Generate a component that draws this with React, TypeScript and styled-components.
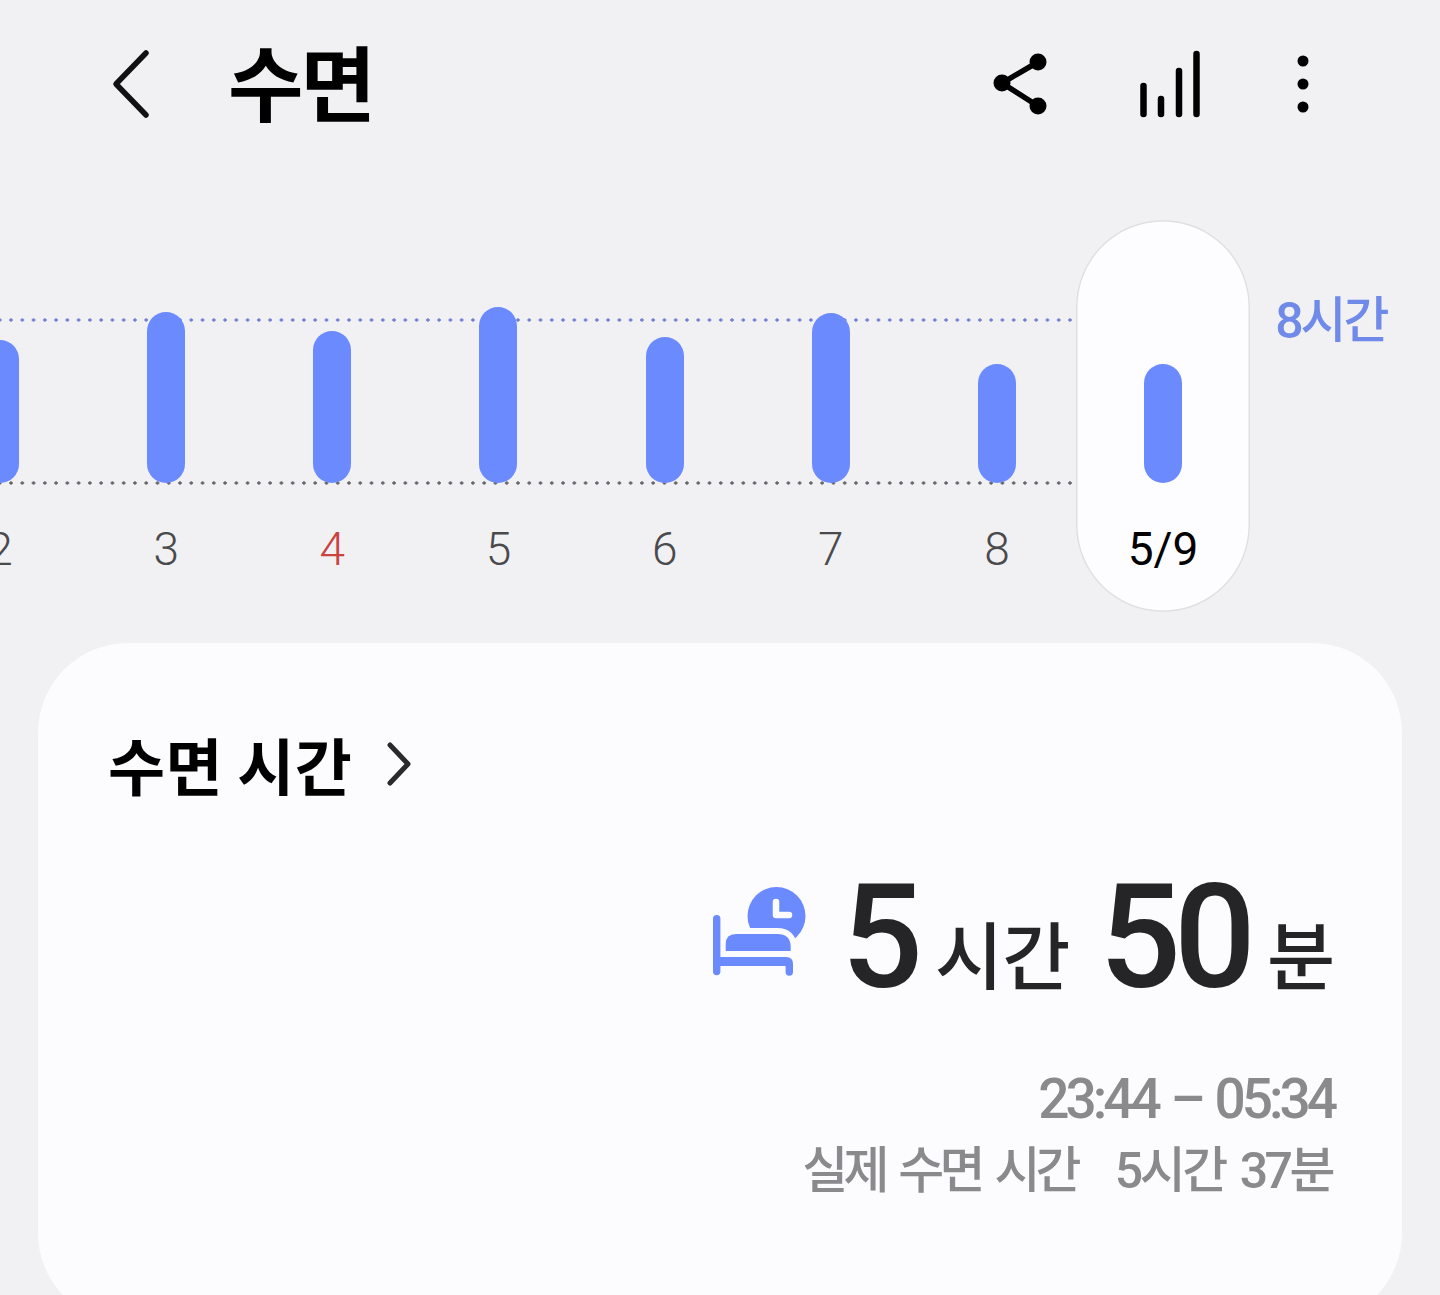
import * as React from "react";
import styled, { createGlobalStyle } from "styled-components";

const GlobalStyle = createGlobalStyle`
  html, body {
    margin: 0;
    padding: 0;
    background: #f1f1f4;
  }
  body {
    font-family: Roboto, "Noto Sans CJK KR", sans-serif;
  }
`;

const Page = styled.div`
  width: 1440px;
  height: 1295px;
  overflow: hidden;
  background: #f1f1f4;
`;

const Header = styled.header`
  display: flex;
  align-items: center;
  height: 168px;
  padding: 0 130px 0 108px;
  box-sizing: border-box;
`;

const HeaderTitle = styled.h1`
  margin: 0 0 8px 75px;
  flex: 1;
  font-family: "Noto Sans CJK KR", sans-serif;
  font-size: 82px;
  font-weight: 700;
  line-height: 1;
  letter-spacing: -3px;
  color: #000;
`;

const HeaderIcons = styled.div`
  display: flex;
  align-items: center;
  gap: 90px;
`;

const Chart = styled.section`
  position: relative;
  height: 392px;
  margin-top: 52px;
`;

const GuideLine = styled.div<{ $top: number; $color: string }>`
  position: absolute;
  left: 0;
  top: ${(p) => p.$top}px;
  width: 1072px;
  height: 4px;
  background-image: radial-gradient(circle, ${(p) => p.$color} 1.4px, transparent 1.9px);
  background-size: 11.27px 4px;
  background-position: 5.4px 0;
`;

const Columns = styled.div`
  position: relative;
  z-index: 1;
  display: flex;
  margin-left: -83px;
`;

const Column = styled.div<{ $selected?: boolean }>`
  flex: none;
  display: flex;
  flex-direction: column;
  align-items: center;
  height: 392px;
  width: ${(p) => (p.$selected ? "174px" : "166.15px")};
  margin: ${(p) => (p.$selected ? "0 -3.9px" : "0")};
  border-radius: 87px;
  background: ${(p) => (p.$selected ? "#fdfdff" : "transparent")};
  box-shadow: ${(p) => (p.$selected ? "inset 0 0 0 1.5px #dfdfe2" : "none")};
`;

const Plot = styled.div`
  flex: none;
  display: flex;
  align-items: flex-end;
  height: 263px;
`;

const Bar = styled.div`
  width: 38px;
  border-radius: 19px;
  background: #6b8afd;
`;

const DayLabel = styled.div<{ $tone?: "red" | "black" }>`
  margin-top: 36px;
  font-size: 46px;
  line-height: 60px;
  font-weight: ${(p) => (p.$tone === "black" ? 400 : 300)};
  color: ${(p) =>
    p.$tone === "red" ? "#c9433f" : p.$tone === "black" ? "#000" : "#4a4a4d"};
`;

const GoalLabel = styled.div`
  flex: none;
  margin: 67px 0 0 29px;
  font-size: 50px;
  line-height: 68px;
  font-weight: 500;
  letter-spacing: -3px;
  color: #6f8ae8;
`;

const Card = styled.section`
  box-sizing: border-box;
  height: 680px;
  margin: 31px 38px 0;
  padding: 81px 68px 0 70px;
  border-radius: 90px;
  background: #fcfcff;
`;

const CardTitle = styled.div`
  display: flex;
  align-items: center;
  gap: 34px;
  font-family: "Noto Sans CJK KR", sans-serif;
  font-size: 62px;
  font-weight: 700;
  line-height: 80px;
  letter-spacing: 0.4px;
  color: #000;
`;

const Duration = styled.div`
  display: flex;
  align-items: baseline;
  justify-content: flex-end;
  margin-top: 64px;
  color: #252528;
`;

const BedIcon = styled.svg`
  align-self: center;
  margin: 0 35px 12px 0;
`;

const Big = styled.span`
  font-size: 144px;
  line-height: 140px;
  font-weight: 500;
  letter-spacing: -7px;
`;

const Unit = styled.span<{ $before: number; $after: number }>`
  margin: 0 ${(p) => p.$after}px 0 ${(p) => p.$before}px;
  font-family: "Noto Sans CJK KR", sans-serif;
  font-size: 74px;
  font-weight: 500;
  letter-spacing: -1px;
  transform: translateY(-3px);
`;

const TimeRange = styled.div`
  margin-top: 57px;
  text-align: right;
  font-size: 55px;
  line-height: 68px;
  font-weight: 500;
  letter-spacing: -4px;
  word-spacing: 3px;
  color: #8a8a8d;
  white-space: pre;
`;

const ActualSleep = styled.div`
  display: flex;
  justify-content: flex-end;
  gap: 38px;
  margin: 4px 2px 0 0;
  font-size: 50px;
  line-height: 68px;
  font-weight: 500;
  letter-spacing: -4.8px;
  word-spacing: 6px;
  color: #8a8a8d;
`;

const ActualValue = styled.span`
  letter-spacing: -3.5px;
`;

const days = [
  { label: "2", height: 143 },
  { label: "3", height: 171 },
  { label: "4", height: 152, tone: "red" as const },
  { label: "5", height: 176 },
  { label: "6", height: 146 },
  { label: "7", height: 170 },
  { label: "8", height: 119 },
];

const App = (): React.ReactElement => {
  return (
    <Page>
      <GlobalStyle />
      <Header>
        <svg width="45" height="76" viewBox="0 0 45 76">
          <path
            d="M38 7 L8 38 L38 69"
            fill="none"
            stroke="#111"
            strokeWidth="5.5"
            strokeLinecap="round"
            strokeLinejoin="round"
          />
        </svg>
        <HeaderTitle>수면</HeaderTitle>
        <HeaderIcons>
          <svg width="60" height="68" viewBox="0 0 60 68">
            <path d="M48 12 L12 33 L48 56" fill="none" stroke="#000" strokeWidth="5.5" />
            <circle cx="48" cy="12" r="8.5" fill="#000" />
            <circle cx="12" cy="33" r="8.5" fill="#000" />
            <circle cx="48" cy="56" r="8.5" fill="#000" />
          </svg>
          <svg width="66" height="68" viewBox="0 0 66 68">
            <g stroke="#000" strokeWidth="6.5" strokeLinecap="round">
              <line x1="3.5" y1="36" x2="3.5" y2="64" />
              <line x1="21" y1="49" x2="21" y2="64" />
              <line x1="39" y1="21" x2="39" y2="64" />
              <line x1="56.5" y1="4" x2="56.5" y2="64" />
            </g>
          </svg>
          <svg width="14" height="68" viewBox="0 0 14 68">
            <circle cx="7" cy="11" r="5.5" fill="#000" />
            <circle cx="7" cy="34" r="5.5" fill="#000" />
            <circle cx="7" cy="57" r="5.5" fill="#000" />
          </svg>
        </HeaderIcons>
      </Header>

      <Chart>
        <GuideLine $top={98} $color="#6f7fd6" />
        <GuideLine $top={261} $color="#66666a" />
        <Columns>
          {days.map((day) => (
            <Column key={day.label}>
              <Plot>
                <Bar style={{ height: day.height }} />
              </Plot>
              <DayLabel $tone={day.tone}>{day.label}</DayLabel>
            </Column>
          ))}
          <Column $selected>
            <Plot>
              <Bar style={{ height: 119 }} />
            </Plot>
            <DayLabel $tone="black">5/9</DayLabel>
          </Column>
          <GoalLabel>8시간</GoalLabel>
        </Columns>
      </Chart>

      <Card>
        <CardTitle>
          수면 시간
          <svg width="26" height="44" viewBox="0 0 26 44">
            <path
              d="M4 3 L22 22 L4 41"
              fill="none"
              stroke="#2a2a2c"
              strokeWidth="5"
              strokeLinecap="round"
              strokeLinejoin="round"
            />
          </svg>
        </CardTitle>
        <Duration>
          <BedIcon width="94" height="90" viewBox="0 0 94 90">
            <circle cx="64.5" cy="29" r="29" fill="#6b8afd" />
            <path
              d="M13.7 64 V57 Q13.7 47 24 47 H65 Q78.7 47 78.7 60 V64 Z"
              fill="#6b8afd"
              stroke="#fcfcff"
              strokeWidth="12"
              paintOrder="stroke"
            />
            <path
              d="M64 15 V28 H77"
              fill="none"
              stroke="#fcfcff"
              strokeWidth="6.5"
              strokeLinecap="round"
              strokeLinejoin="round"
            />
            <path
              d="M4.7 31.7 V84.5"
              fill="none"
              stroke="#6b8afd"
              strokeWidth="7.4"
              strokeLinecap="round"
            />
            <path
              d="M8 70 H74 Q81 70 81 77 V85 A3.7 3.7 0 0 1 73.6 85 V79 H8 Z"
              fill="#6b8afd"
            />
          </BedIcon>
          <Big>5</Big>
          <Unit $before={19} $after={30}>시간</Unit>
          <Big>50</Big>
          <Unit $before={18} $after={0}>분</Unit>
        </Duration>
        <TimeRange>23:44 – 05:34</TimeRange>
        <ActualSleep>
          <span>실제 수면 시간</span>
          <ActualValue>5시간 37분</ActualValue>
        </ActualSleep>
      </Card>
    </Page>
  );
};

export default App;
